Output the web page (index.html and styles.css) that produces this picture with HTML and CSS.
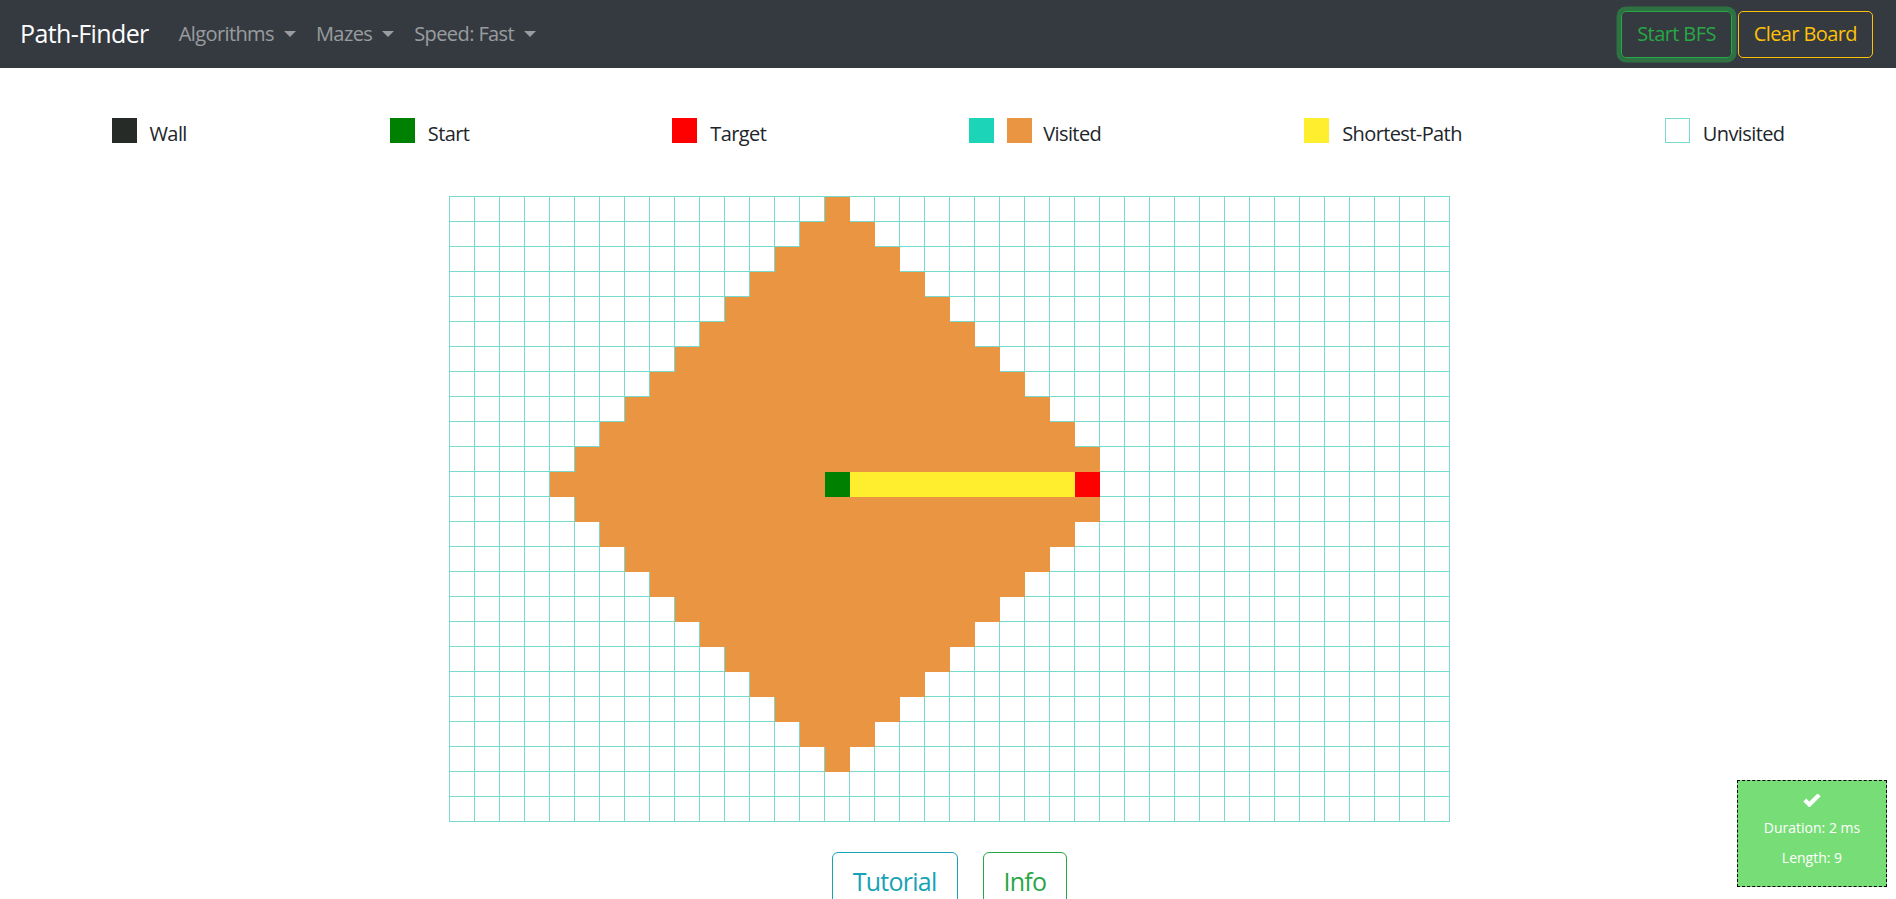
FILE: index.html
```html
<!DOCTYPE html>
<html lang="en">
<head>
<meta charset="utf-8">
<title>Path-Finder</title>
<link rel="stylesheet" href="styles.css">
</head>
<body>
<nav class="navbar">
  <div class="nav-left">
    <span class="brand">Path-Finder</span>
    <span class="nav-link">Algorithms</span>
    <span class="nav-link">Mazes</span>
    <span class="nav-link">Speed: Fast</span>
  </div>
  <div class="nav-right">
    <button class="btn btn-start">Start BFS</button>
    <button class="btn btn-clear">Clear Board</button>
  </div>
</nav>

<ul class="legend">
  <li class="legend-item"><span class="swatch sw-wall"></span><span class="legend-label">Wall</span></li>
  <li class="legend-item"><span class="swatch sw-start"></span><span class="legend-label">Start</span></li>
  <li class="legend-item"><span class="swatch sw-target"></span><span class="legend-label">Target</span></li>
  <li class="legend-item"><span class="swatch sw-visited-a"></span><span class="swatch sw-visited-b"></span><span class="legend-label">Visited</span></li>
  <li class="legend-item"><span class="swatch sw-path"></span><span class="legend-label">Shortest-Path</span></li>
  <li class="legend-item"><span class="swatch sw-unvisited"></span><span class="legend-label">Unvisited</span></li>
</ul>

<div class="board-wrap">
  <div class="grid" id="grid"></div>
</div>

<div class="actions">
  <button class="btn-lg btn-tutorial">Tutorial</button>
  <button class="btn-lg btn-info">Info</button>
</div>

<div class="toast">
  <svg class="check" width="18" height="13" viewBox="0 0 18 13" aria-hidden="true">
    <polyline points="1.8,6 6.4,10.6 16.2,0.8" fill="none" stroke="#fff" stroke-width="4.2" stroke-linejoin="miter" stroke-linecap="butt"/>
  </svg>
  <p class="toast-line first">Duration: 2 ms</p>
  <p class="toast-line">Length: 9</p>
</div>

<script src="script.js"></script>
</body>
</html>
```

FILE: styles.css
```css
* {
  box-sizing: border-box;
}

html,
body {
  margin: 0;
  padding: 0;
  overflow: hidden;
}

body {
  font-family: "Open Sans", "Noto Sans", sans-serif;
  font-size: 20px;
  line-height: 1.5;
  letter-spacing: -0.03em;
  color: #212529;
  background: #fff;
}

/* ---------- navbar ---------- */
.navbar {
  height: 68px;
  background: #343a40;
  display: flex;
  align-items: center;
  justify-content: space-between;
  padding: 0 23px 0 20px;
}

.nav-left {
  display: flex;
  align-items: center;
}

.brand {
  font-size: 25px;
  line-height: 37.5px;
  color: #fff;
  margin-right: 20px;
}

.nav-link {
  color: rgba(255, 255, 255, 0.5);
  padding: 0 10px;
  line-height: 30px;
  white-space: nowrap;
}

.nav-link::after {
  content: "";
  display: inline-block;
  margin-left: 10px;
  vertical-align: 4px;
  border-top: 6px solid;
  border-left: 6px solid transparent;
  border-right: 6px solid transparent;
}

.nav-right {
  display: flex;
  gap: 6px;
}

.btn {
  font-family: inherit;
  font-size: 20px;
  line-height: 30px;
  letter-spacing: -0.03em;
  padding: 7.5px 15px;
  background: transparent;
  border: 1px solid;
  border-radius: 5px;
}

.btn-start {
  color: #28a745;
  border-color: #28a745;
  box-shadow: 0 0 0 4.5px rgba(40, 167, 69, 0.5);
}

.btn-clear {
  color: #ffc107;
  border-color: #ffc107;
}

/* ---------- legend ---------- */
.legend {
  list-style: none;
  margin: 50px 0 0;
  padding: 0 10px;
  height: 31px;
  display: flex;
  justify-content: space-around;
}

.legend-item {
  display: flex;
  align-items: flex-start;
}

.swatch {
  width: 25px;
  height: 25px;
  margin-right: 13px;
  flex: none;
}

.legend-label {
  margin-top: 1px;
  line-height: 30px;
}

.sw-wall { background: #262b27; }
.sw-start { background: #008000; }
.sw-target { background: #ff0000; }
.sw-visited-a { background: #1cd4b8; }
.sw-visited-b { background: #e99541; margin-right: 11px; }
.sw-path { background: #ffee2e; }
.sw-unvisited { background: #fff; border: 1px solid #78d9cd; }

/* ---------- board ---------- */
.board-wrap {
  margin-top: 47px;
  display: flex;
  justify-content: center;
  padding-left: 3px;
}

.grid {
  display: grid;
  grid-template-columns: repeat(40, 25px);
  grid-auto-rows: 25px;
  border-top: 1px solid #78d9cd;
  border-left: 1px solid #78d9cd;
}

.cell {
  background: #fff;
  border-right: 1px solid #78d9cd;
  border-bottom: 1px solid #78d9cd;
}

.cell.visited {
  background: #e99541;
  border-color: #e99541;
}

.cell.start {
  background: #008000;
  border-color: #008000;
}

.cell.target {
  background: #ff0000;
  border-color: #ff0000;
}

.cell.path {
  background: #ffee2e;
  border-color: #ffee2e;
}

/* ---------- bottom buttons ---------- */
.actions {
  margin-top: 30px;
  display: flex;
  justify-content: center;
  gap: 25px;
  padding-left: 3px;
}

.btn-lg {
  font-family: inherit;
  font-size: 25px;
  line-height: 37.5px;
  letter-spacing: -0.03em;
  padding: 10px 20px;
  background: transparent;
  border: 1px solid;
  border-radius: 6px;
}

.btn-tutorial {
  color: #17a2b8;
  border-color: #17a2b8;
}

.btn-info {
  color: #28a745;
  border-color: #28a745;
}

/* ---------- toast ---------- */
.toast {
  position: fixed;
  right: 9px;
  bottom: 12px;
  width: 150px;
  height: 107px;
  background: #77dd77;
  border: 1px dashed #000;
  color: #fff;
  text-align: center;
  font-size: 14px;
  line-height: 21px;
  letter-spacing: 0;
  padding-top: 13px;
}

.check {
  display: block;
  margin: 0 auto;
}

.toast-line {
  margin: 9px 0 0;
}

.toast-line.first {
  margin-top: 10px;
}
```

FILE: script.js
```js
(function () {
  var grid = document.getElementById('grid');
  var ROWS = 25, COLS = 40;
  var SR = 11, SC = 15, TR = 11, TC = 25;
  var frag = document.createDocumentFragment();
  for (var r = 0; r < ROWS; r++) {
    for (var c = 0; c < COLS; c++) {
      var cell = document.createElement('div');
      var cls = 'cell';
      var dist = Math.abs(r - SR) + Math.abs(c - SC);
      if (r === SR && c === SC) {
        cls += ' start';
      } else if (r === TR && c === TC) {
        cls += ' target';
      } else if (r === SR && c > SC && c < TC) {
        cls += ' path';
      } else if (dist <= 11 && !(r === TR && c === TC + 1)) {
        cls += ' visited';
      }
      cell.className = cls;
      frag.appendChild(cell);
    }
  }
  grid.appendChild(frag);
})();
```
